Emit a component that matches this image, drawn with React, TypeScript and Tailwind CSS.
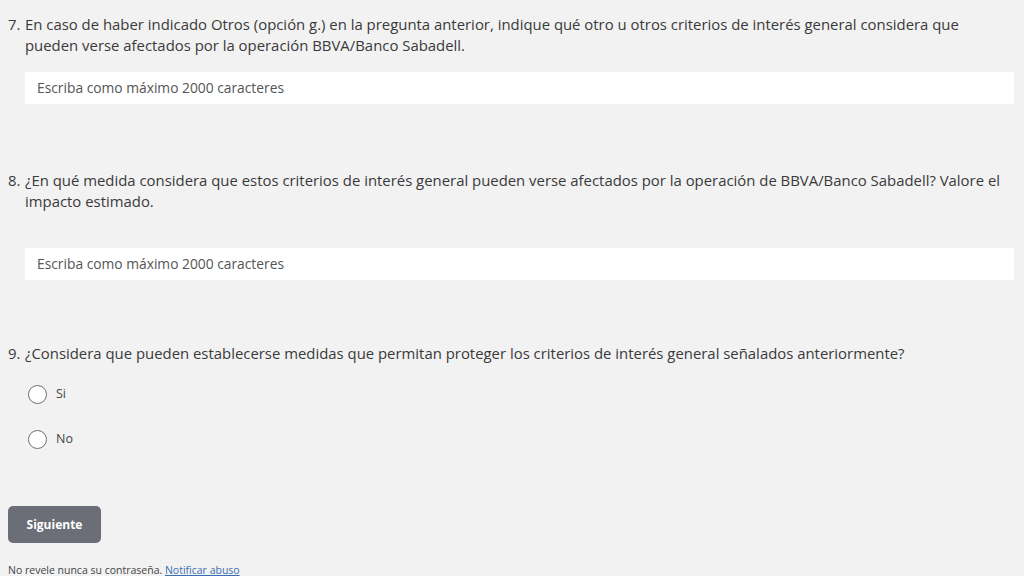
import React from "react";

const font = { fontFamily: '"Open Sans", "Noto Sans", Arial, sans-serif' };

function Radio({ label }: { label: string }) {
  return (
    <label className="flex items-center gap-[9px] h-[20px]">
      <span className="w-[19px] h-[19px] rounded-full border-[1.5px] border-[#707070] bg-white" />
      <span className="text-[12.5px] text-[#444]">{label}</span>
    </label>
  );
}

export default function App() {
  return (
    <div
      className="w-[1024px] h-[576px] overflow-hidden bg-[#f2f2f3] text-[#3a3a3a] relative"
      style={font}
    >
      <div className="pl-[8px] pr-[10px] pt-[14px]">
        {/* Q7 */}
        <div className="flex text-[14.9px] leading-[21px]">
          <span className="w-[17px] shrink-0">7.</span>
          <span className="whitespace-nowrap">
            En caso de haber indicado Otros (opción g.) en la pregunta anterior, indique qué otro u otros criterios de interés general considera que
            <br />
            pueden verse afectados por la operación BBVA/Banco Sabadell.
          </span>
        </div>
        <div className="ml-[17px] mt-[16px] h-[32px] bg-white flex items-center px-[12px] text-[13.8px] text-[#555]">
          Escriba como máximo 2000 caracteres
        </div>

        {/* Q8 */}
        <div className="mt-[66px] flex text-[14.9px] leading-[21px]">
          <span className="w-[17px] shrink-0">8.</span>
          <span className="whitespace-nowrap">
            ¿En qué medida considera que estos criterios de interés general pueden verse afectados por la operación de BBVA/Banco Sabadell? Valore el
            <br />
            impacto estimado.
          </span>
        </div>
        <div className="ml-[17px] mt-[36px] h-[32px] bg-white flex items-center px-[12px] text-[13.8px] text-[#555]">
          Escriba como máximo 2000 caracteres
        </div>

        {/* Q9 */}
        <div className="mt-[63px] flex text-[14.9px] leading-[21px]">
          <span className="w-[17px] shrink-0">9.</span>
          <span className="whitespace-nowrap">
            ¿Considera que pueden establecerse medidas que permitan proteger los criterios de interés general señalados anteriormente?
          </span>
        </div>
        <div className="ml-[20px] mt-[20px] flex flex-col gap-[25px]">
          <Radio label="Si" />
          <Radio label="No" />
        </div>

        <button className="mt-[57px] w-[93px] h-[37px] rounded-[5px] bg-[#6b6e77] text-white text-[12px] font-bold">
          Siguiente
        </button>

        <div className="mt-[20px] text-[10.5px] text-[#444] leading-[14px]">
          No revele nunca su contraseña.{" "}
          <a className="text-[#3a6fb5] underline">Notificar abuso</a>
        </div>
      </div>
    </div>
  );
}
